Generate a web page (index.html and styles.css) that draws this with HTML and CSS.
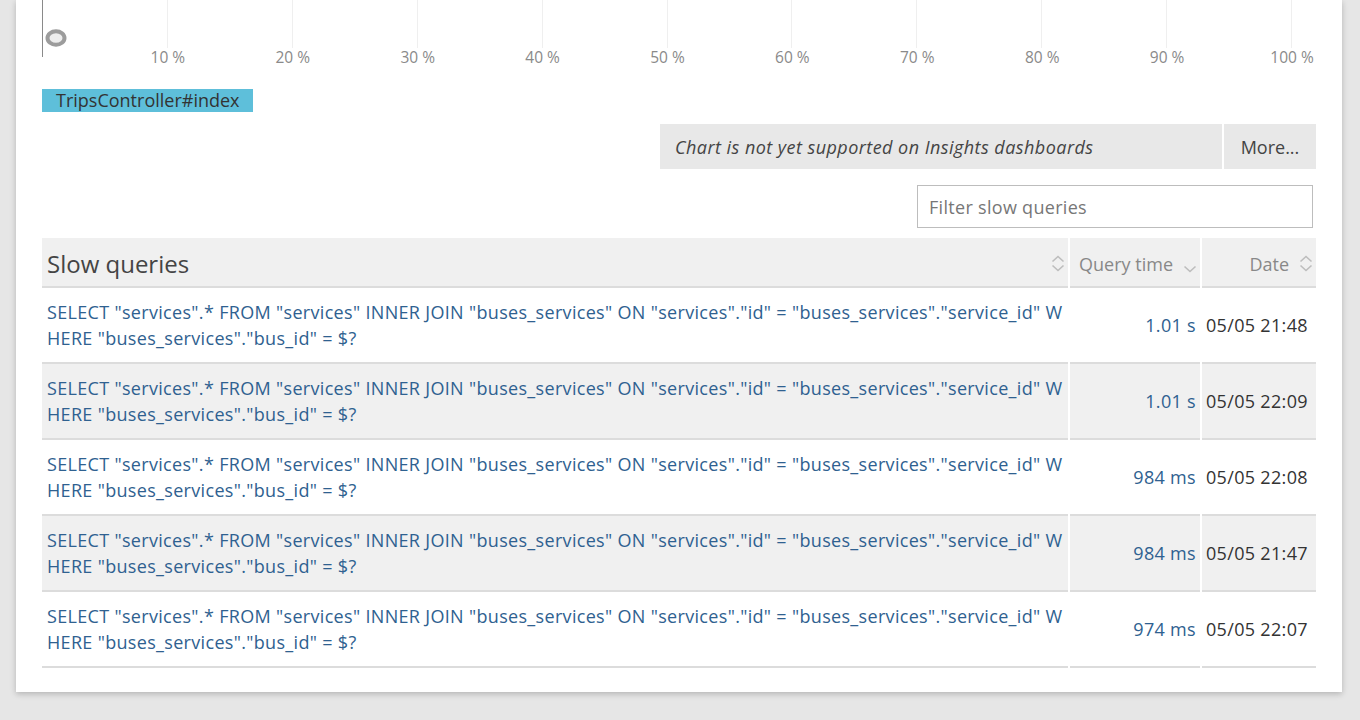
FILE: index.html
```html
<!DOCTYPE html>
<html lang="en">
<head>
<meta charset="utf-8">
<title>Slow queries</title>
<link rel="stylesheet" href="styles.css">
</head>
<body>
<div class="panel">
  <div class="chart">
    <div class="axis"></div>
    <div class="grid" style="left:10%"></div>
    <div class="grid" style="left:20%"></div>
    <div class="grid" style="left:30%"></div>
    <div class="grid" style="left:40%"></div>
    <div class="grid" style="left:50%"></div>
    <div class="grid" style="left:60%"></div>
    <div class="grid" style="left:70%"></div>
    <div class="grid" style="left:80%"></div>
    <div class="grid" style="left:90%"></div>
    <div class="grid" style="left:100%"></div>
    <span class="tick" style="left:10%">10 %</span>
    <span class="tick" style="left:20%">20 %</span>
    <span class="tick" style="left:30%">30 %</span>
    <span class="tick" style="left:40%">40 %</span>
    <span class="tick" style="left:50%">50 %</span>
    <span class="tick" style="left:60%">60 %</span>
    <span class="tick" style="left:70%">70 %</span>
    <span class="tick" style="left:80%">80 %</span>
    <span class="tick" style="left:90%">90 %</span>
    <span class="tick" style="left:100%">100 %</span>
    <svg class="dot" width="24" height="20" viewBox="0 0 24 20"><ellipse cx="12" cy="10" rx="8.5" ry="6.8" fill="#ededed" stroke="#9c9c9c" stroke-width="4"/></svg>
  </div>

  <div class="legend"><span class="tag">TripsController#index</span></div>

  <div class="toolbar">
    <div class="notice">Chart is not yet supported on Insights dashboards</div>
    <div class="more">More...</div>
  </div>

  <div class="filter-row">
    <input class="filter" type="text" placeholder="Filter slow queries">
  </div>

  <table class="queries">
    <colgroup>
      <col class="c-query">
      <col class="c-time">
      <col class="c-date">
    </colgroup>
    <thead>
      <tr>
        <th class="h-query"><span class="h-inner h-split"><span class="h-title">Slow queries</span><svg class="sort" width="14" height="18" viewBox="0 0 14 18"><path d="M1.5 6.5 L7 1.5 L12.5 6.5" /><path d="M1.5 10.5 L7 15.5 L12.5 10.5" /></svg></span></th>
        <th class="h-time"><span class="h-inner">Query time<svg class="sort" width="14" height="18" viewBox="0 0 14 18"><path d="M1.5 11.5 L7 16.5 L12.5 11.5" /></svg></span></th>
        <th class="h-date"><span class="h-inner">Date<svg class="sort" width="14" height="18" viewBox="0 0 14 18"><path d="M1.5 6.5 L7 1.5 L12.5 6.5" /><path d="M1.5 10.5 L7 15.5 L12.5 10.5" /></svg></span></th>
      </tr>
    </thead>
    <tbody>
      <tr>
        <td class="q">SELECT "services".* FROM "services" INNER JOIN "buses_services" ON "services"."id" = "buses_services"."service_id" W<br>HERE "buses_services"."bus_id" = $?</td>
        <td class="t">1.01 s</td>
        <td class="d">05/05 21:48</td>
      </tr>
      <tr>
        <td class="q">SELECT "services".* FROM "services" INNER JOIN "buses_services" ON "services"."id" = "buses_services"."service_id" W<br>HERE "buses_services"."bus_id" = $?</td>
        <td class="t">1.01 s</td>
        <td class="d">05/05 22:09</td>
      </tr>
      <tr>
        <td class="q">SELECT "services".* FROM "services" INNER JOIN "buses_services" ON "services"."id" = "buses_services"."service_id" W<br>HERE "buses_services"."bus_id" = $?</td>
        <td class="t">984 ms</td>
        <td class="d">05/05 22:08</td>
      </tr>
      <tr>
        <td class="q">SELECT "services".* FROM "services" INNER JOIN "buses_services" ON "services"."id" = "buses_services"."service_id" W<br>HERE "buses_services"."bus_id" = $?</td>
        <td class="t">984 ms</td>
        <td class="d">05/05 21:47</td>
      </tr>
      <tr>
        <td class="q">SELECT "services".* FROM "services" INNER JOIN "buses_services" ON "services"."id" = "buses_services"."service_id" W<br>HERE "buses_services"."bus_id" = $?</td>
        <td class="t">974 ms</td>
        <td class="d">05/05 22:07</td>
      </tr>
    </tbody>
  </table>
</div>
</body>
</html>
```

FILE: styles.css
```css
* {
  box-sizing: border-box;
}

html, body {
  margin: 0;
  padding: 0;
}

body {
  background: #e6e6e6;
  font-family: "Open Sans", "Liberation Sans", sans-serif;
  font-size: 18px;
  color: #333;
  height: 720px;
  overflow: hidden;
}

.panel {
  margin-left: 16px;
  width: 1326px;
  background: #fff;
  padding: 0 26px 24px 26px;
  box-shadow: 0 2px 6px rgba(0, 0, 0, 0.22);
}

/* chart */
.chart {
  position: relative;
  width: 1249px;
  height: 70px;
}

.axis {
  position: absolute;
  left: 0;
  top: 0;
  width: 1px;
  height: 57px;
  background: #8a8a8a;
}

.grid {
  position: absolute;
  top: 0;
  width: 1px;
  height: 48px;
  background: #efefef;
}

.tick {
  position: absolute;
  top: 46px;
  transform: translateX(-50%);
  margin-left: 1px;
  font-size: 15.5px;
  line-height: 22px;
  color: #8a8a8a;
  white-space: nowrap;
}

.dot {
  position: absolute;
  left: 2px;
  top: 28px;
}

/* legend */
.legend {
  margin-top: 18px;
  height: 23px;
}

.tag {
  display: inline-block;
  background: #5ebfda;
  color: #333;
  line-height: 23px;
  height: 23px;
  padding: 0 13px 0 14px;
}

/* toolbar */
.toolbar {
  margin-top: 13px;
  display: flex;
  justify-content: flex-end;
  gap: 2px;
  height: 45px;
}

.notice {
  width: 562px;
  background: #e8e8e8;
  color: #444;
  font-style: italic;
  letter-spacing: 0.45px;
  padding: 0 15px;
  line-height: 46px;
  white-space: nowrap;
}

.more {
  width: 92px;
  background: #e8e8e8;
  color: #444;
  line-height: 46px;
  text-align: center;
}

/* filter */
.filter-row {
  margin-top: 16px;
  display: flex;
  justify-content: flex-end;
  padding-right: 3px;
}

.filter {
  width: 396px;
  height: 43px;
  border: 1px solid #bdbdbd;
  border-radius: 0;
  padding: 0 11px;
  font-family: "Open Sans", "Liberation Sans", sans-serif;
  font-size: 18px;
  letter-spacing: 0.3px;
  color: #333;
  outline: none;
}

.filter::placeholder {
  color: #777;
}

/* table */
.queries {
  margin: 10px -2px 0 -2px;
  width: 1278px;
  table-layout: fixed;
  border-collapse: separate;
  border-spacing: 2px 0;
}

.c-query { width: 1026px; }
.c-time { width: 130px; }
.c-date { width: 114px; }

.queries th {
  background: #f0f0f0;
  height: 50px;
  border-bottom: 2px solid #dcdcdc;
  font-weight: normal;
  color: #888;
  padding: 4px 3px 0 5px;
  vertical-align: middle;
}

.h-inner {
  display: flex;
  align-items: center;
  justify-content: flex-end;
}

.h-split {
  justify-content: space-between;
}

.h-title {
  font-size: 24px;
  color: #444;
  line-height: 32px;
}

.sort {
  margin-left: 10px;
  flex: none;
}

.sort path {
  fill: none;
  stroke: #bdbdbd;
  stroke-width: 1.6;
}

.queries td {
  height: 76px;
  border-bottom: 2px solid #dcdcdc;
  vertical-align: middle;
  line-height: 26px;
  letter-spacing: 0.32px;
  padding: 0 5px;
}

.queries tbody tr:nth-child(even) td {
  background: #f0f0f0;
}

td.q {
  color: #2f6190;
  white-space: nowrap;
  overflow: hidden;
}

td.t {
  color: #2f6190;
  text-align: right;
  padding-right: 4px;
}

td.d {
  color: #333;
  padding-left: 4px;
  padding-right: 0;
  white-space: nowrap;
}
```
